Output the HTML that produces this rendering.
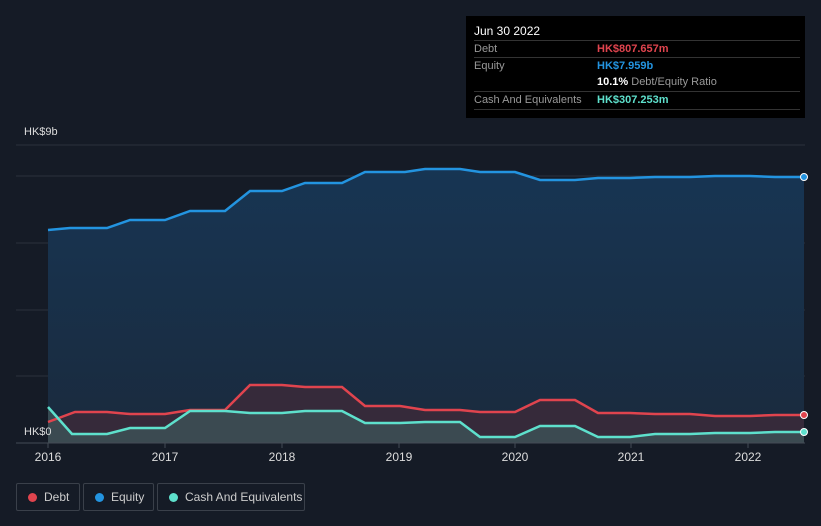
<!DOCTYPE html><html><head><style>
body{margin:0;background:#151b26;font-family:"Liberation Sans",sans-serif;}
.tip{position:absolute;left:466px;top:16px;width:339px;height:102px;background:#000;}
.r{position:absolute;left:8px;width:326px;font-size:11px;color:#999;border-top:1px solid #333;height:17px;line-height:17px}
.v{position:absolute;left:123px;font-weight:bold}
.lg{position:absolute;top:483px;height:26px;border:1px solid #3a404a;border-radius:2px;color:#ccc;font-size:12px;line-height:26px}
.dot{position:absolute;top:9px;width:9px;height:9px;border-radius:50%}
</style></head><body>
<svg width="821" height="526" style="position:absolute;left:0;top:0">
<defs><linearGradient id="g" x1="0" y1="0" x2="0" y2="1"><stop offset="0" stop-color="#173553"/><stop offset="1" stop-color="#1a2a3d"/></linearGradient></defs>
<g stroke="#2a313c" stroke-width="1">
<line x1="16" y1="145" x2="805" y2="145"/><line x1="16" y1="176" x2="805" y2="176"/><line x1="16" y1="243" x2="805" y2="243"/><line x1="16" y1="310" x2="805" y2="310"/><line x1="16" y1="376" x2="805" y2="376"/></g>
<polygon fill="url(#g)" points="48,443 48,230 70,228 107,228 130,220 165,220 190,211 225,211 250,191 282,191 305,183 342,183 365,172 405,172 425,169 460,169 480,172 515,172 540,180 575,180 598,178 630,178 655,177 690,177 715,176 750,176 775,177 804,177 804,443"/>
<polygon fill="#3a2a3a" opacity="0.9" points="48,443 48,422 75,412 107,412 130,414 165,414 190,410 225,410 250,385 282,385 305,387 342,387 365,406 400,406 425,410 460,410 480,412 515,412 540,400 575,400 598,413 630,413 655,414 690,414 715,416 750,416 775,415 804,415 804,443"/>
<polygon fill="#3d5257" opacity="0.8" points="48,443 48,407 72,434 107,434 130,428 165,428 190,411 225,411 250,413 282,413 305,411 342,411 365,423 400,423 425,422 460,422 480,437 515,437 540,426 575,426 598,437 630,437 655,434 690,434 715,433 750,433 775,432 804,432 804,443"/>
<polyline fill="none" stroke="#2394e0" stroke-width="2.5" points="48,230 70,228 107,228 130,220 165,220 190,211 225,211 250,191 282,191 305,183 342,183 365,172 405,172 425,169 460,169 480,172 515,172 540,180 575,180 598,178 630,178 655,177 690,177 715,176 750,176 775,177 804,177"/>
<polyline fill="none" stroke="#e0444e" stroke-width="2.5" points="48,422 75,412 107,412 130,414 165,414 190,410 225,410 250,385 282,385 305,387 342,387 365,406 400,406 425,410 460,410 480,412 515,412 540,400 575,400 598,413 630,413 655,414 690,414 715,416 750,416 775,415 804,415"/>
<polyline fill="none" stroke="#5ee0cc" stroke-width="2.5" points="48,407 72,434 107,434 130,428 165,428 190,411 225,411 250,413 282,413 305,411 342,411 365,423 400,423 425,422 460,422 480,437 515,437 540,426 575,426 598,437 630,437 655,434 690,434 715,433 750,433 775,432 804,432"/>
<line x1="16" y1="443" x2="805" y2="443" stroke="#444b55"/>
<g stroke="#444b55"><line x1="48" y1="443" x2="48" y2="448"/><line x1="165" y1="443" x2="165" y2="448"/><line x1="282" y1="443" x2="282" y2="448"/><line x1="399" y1="443" x2="399" y2="448"/><line x1="515" y1="443" x2="515" y2="448"/><line x1="631" y1="443" x2="631" y2="448"/><line x1="748" y1="443" x2="748" y2="448"/></g>
<circle cx="804" cy="177" r="3.5" fill="#2394e0" stroke="#fff" stroke-width="1"/>
<circle cx="804" cy="415" r="3.5" fill="#e0444e" stroke="#fff" stroke-width="1"/>
<circle cx="804" cy="432" r="3.5" fill="#5ee0cc" stroke="#fff" stroke-width="1"/>
<g fill="#ddd" font-size="12" font-family="Liberation Sans"><text x="24" y="135" font-size="11">HK$9b</text><text x="24" y="435" font-size="11">HK$0</text>
<g text-anchor="middle"><text x="48" y="461">2016</text><text x="165" y="461">2017</text><text x="282" y="461">2018</text><text x="399" y="461">2019</text><text x="515" y="461">2020</text><text x="631" y="461">2021</text><text x="748" y="461">2022</text></g></g>
</svg>
<div class="tip">
<div style="position:absolute;left:8px;top:8px;color:#fff;font-size:12px">Jun 30 2022</div>
<div class="r" style="top:24px">Debt<span class="v" style="color:#e0444e">HK$807.657m</span></div>
<div class="r" style="top:41px">Equity<span class="v" style="color:#2394e0">HK$7.959b</span></div>
<div class="r" style="top:58px;border-top:none"><span class="v" style="color:#fff">10.1% <span style="color:#999;font-weight:normal">Debt/Equity Ratio</span></span></div>
<div class="r" style="top:75px">Cash And Equivalents<span class="v" style="color:#5ee0cc">HK$307.253m</span></div>
<div class="r" style="top:93px;height:0"></div>
</div>
<div class="lg" style="left:16px;width:62px"><span class="dot" style="left:11px;background:#e0444e"></span><span style="position:absolute;left:27px">Debt</span></div>
<div class="lg" style="left:83px;width:69px"><span class="dot" style="left:11px;background:#2394e0"></span><span style="position:absolute;left:27px">Equity</span></div>
<div class="lg" style="left:157px;width:146px"><span class="dot" style="left:11px;background:#5ee0cc"></span><span style="position:absolute;left:27px">Cash And Equivalents</span></div>
</body></html>
